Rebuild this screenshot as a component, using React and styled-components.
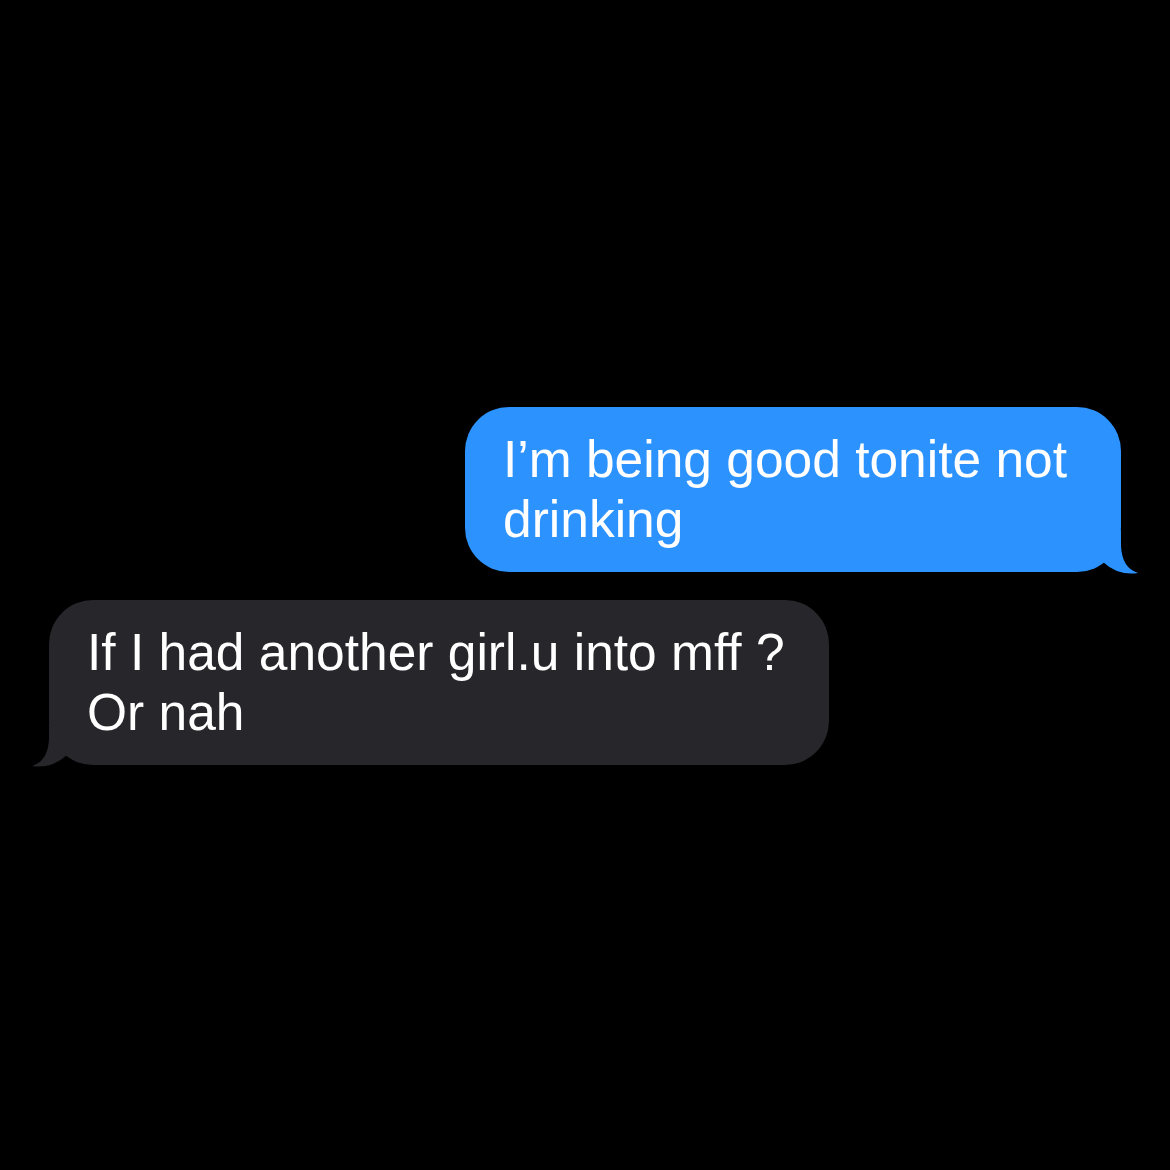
import React from "react";
import styled, { createGlobalStyle } from "styled-components";

const Global = createGlobalStyle`
  html, body {
    margin: 0;
    padding: 0;
    background: #000;
  }
`;

const Screen = styled.div`
  width: 1170px;
  height: 1170px;
  box-sizing: border-box;
  background: #000;
  padding: 407px 49px 0;
  display: flex;
  flex-direction: column;
  gap: 28px;
  font-family: "Liberation Sans", Arial, sans-serif;
`;

const Row = styled.div`
  display: flex;
  justify-content: ${(p) => (p.$sent ? "flex-end" : "flex-start")};
`;

const Bubble = styled.div`
  position: relative;
  box-sizing: border-box;
  width: ${(p) => p.$width}px;
  padding: 22px 40px 23px 38px;
  border-radius: 44px;
  background: ${(p) => (p.$sent ? "#2b92fe" : "#26262b")};
  color: #fff;
  font-size: 51.5px;
  line-height: 60px;
  white-space: nowrap;
  font-variant-ligatures: none;
  font-feature-settings: "liga" 0, "clig" 0;
`;

const Line = styled.div``;

const Tail = styled.svg`
  position: absolute;
  bottom: -3px;
  width: 50px;
  height: 45px;
  ${(p) =>
    p.$sent
      ? "right: -19px;"
      : "left: -19px; transform: scaleX(-1);"}
`;

function BubbleTail({ sent, color }) {
  return (
    <Tail $sent={sent} viewBox="0 0 50 45">
      <path
        d="M31 0 L31 16 Q32 38 48 43 Q28 46 13 32 L0 10 Z"
        fill={color}
      />
    </Tail>
  );
}

function Message({ sent, width, lines }) {
  const color = sent ? "#2b92fe" : "#26262b";
  return (
    <Row $sent={sent}>
      <Bubble $sent={sent} $width={width}>
        {lines.map((l, i) => (
          <Line key={i}>{l}</Line>
        ))}
        <BubbleTail sent={sent} color={color} />
      </Bubble>
    </Row>
  );
}

export default function App() {
  return (
    <>
      <Global />
      <Screen>
        <Message
          sent
          width={656}
          lines={["I\u2019m being good tonite not", "drinking"]}
        />
        <Message
          width={780}
          lines={["If I had another girl.u into mf\u200Cf ?", "Or nah"]}
        />
      </Screen>
    </>
  );
}
